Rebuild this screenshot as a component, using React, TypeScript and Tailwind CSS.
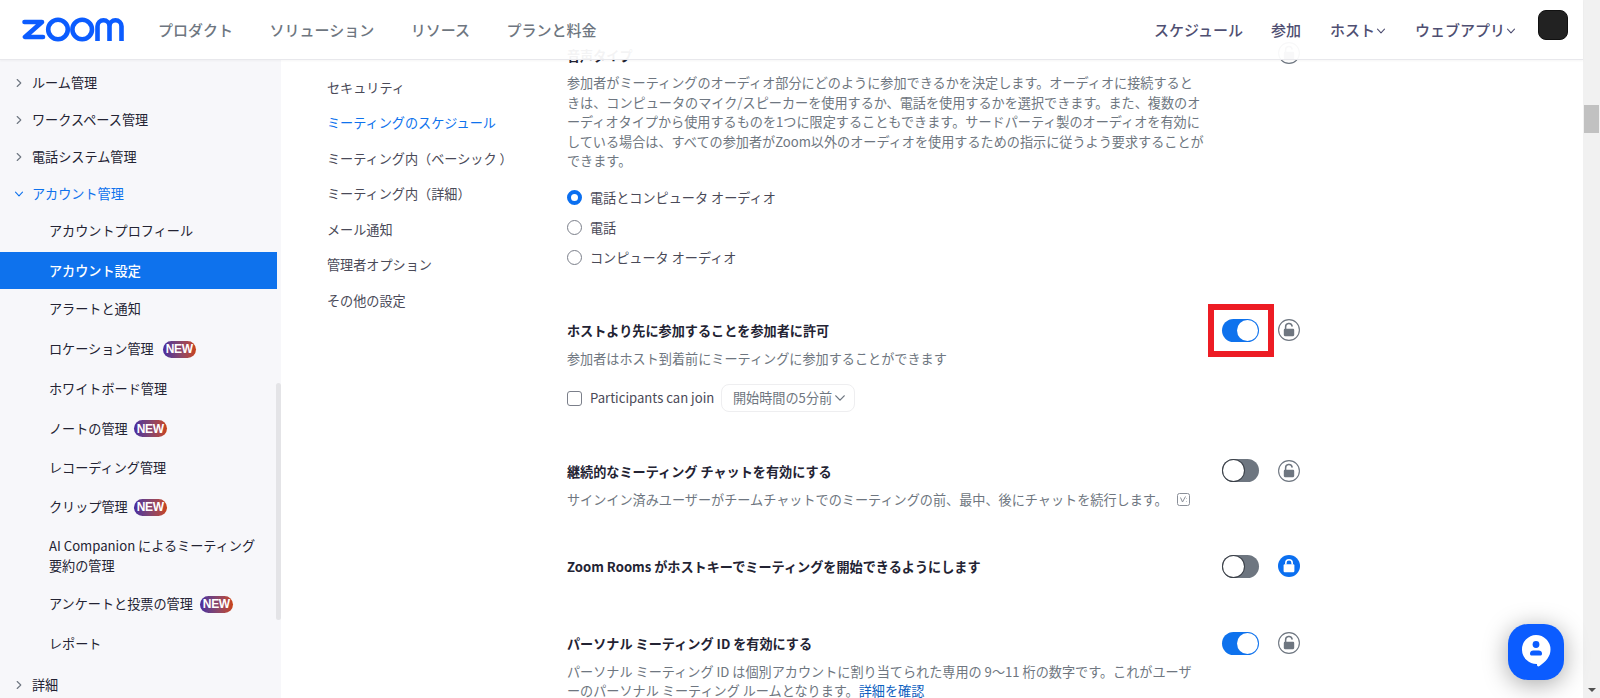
import React from "react";

function Chevron({ down = false, className = "", size = 10 }: { down?: boolean; className?: string; size?: number }) {
  return (
    <svg width={size} height={size} viewBox="0 0 10 10" fill="none" stroke="currentColor" strokeWidth="1.1" strokeLinecap="round" strokeLinejoin="round" className={className}>
      {down ? <path d="M1.5 3.2 5 6.8 8.5 3.2" /> : <path d="M3.2 1.5 6.8 5 3.2 8.5" />}
    </svg>
  );
}

function NewBadge({ ml }: { ml: string }) {
  return (
    <span className={`flex h-[17px] w-[33px] items-center justify-center rounded-full bg-gradient-to-r from-[#4a2a9f] to-[#c9420c] text-[12px] font-bold leading-none tracking-[-0.3px] text-white font-['Liberation_Sans',sans-serif] ${ml}`}>
      NEW
    </span>
  );
}

function Top({ label, open = false }: { label: string; open?: boolean }) {
  return (
    <div className={`flex h-[37px] items-center pl-[14px] text-[13.13px] ${open ? "text-[#0e72ed]" : "text-[#232333]"}`}>
      <Chevron down={open} className={`mr-[8px] ${open ? "text-[#0e72ed]" : "text-[#6e7680]"}`} />
      <span>{label}</span>
    </div>
  );
}

function Sub({ label, badge, h = "h-[40px]" }: { label: string; badge?: string; h?: string }) {
  return (
    <div className={`flex items-center pl-[49px] text-[13.13px] text-[#232333] ${h}`}>
      <span>{label}</span>
      {badge && <NewBadge ml={badge} />}
    </div>
  );
}

function Toggle({ on }: { on: boolean }) {
  return (
    <div className={`flex h-[23px] w-[37px] items-center rounded-full px-[1px] ${on ? "justify-end bg-[#0e72ed]" : "justify-start bg-[#6e7680]"}`}>
      <div className={`h-[21px] w-[21px] rounded-full bg-white ${on ? "" : "shadow-[0_0_0_1px_#3b4048]"}`} />
    </div>
  );
}

function Lock({ locked = false }: { locked?: boolean }) {
  if (locked) {
    return (
      <svg width="22" height="22" viewBox="0 0 22 22" className="shrink-0">
        <circle cx="11" cy="11" r="11" fill="#0b6ff0" />
        <path d="M7.8 9.5V8a3.2 3.2 0 0 1 6.4 0v1.5" fill="none" stroke="#fff" strokeWidth="1.6" />
        <rect x="5.6" y="9.2" width="10.8" height="8" rx="1.2" fill="#fff" />
      </svg>
    );
  }
  return (
    <svg width="22" height="22" viewBox="0 0 22 22" className="shrink-0">
      <circle cx="11" cy="11" r="10.4" fill="#fff" stroke="#6e7680" strokeWidth="1.1" />
      <path d="M7.6 10V7.9a3.3 3.3 0 0 1 6.5-.9" fill="none" stroke="#6e7680" strokeWidth="1.5" strokeLinecap="round" />
      <rect x="5.8" y="9.8" width="10.4" height="7.4" rx="1.1" fill="#6e7680" />
    </svg>
  );
}

function Radio({ on, label }: { on?: boolean; label: string }) {
  return (
    <div className="flex h-[30px] items-center text-[13.13px] text-[#4a4a58]">
      {on ? (
        <span className="mr-[8px] h-[15px] w-[15px] rounded-full border-[4px] border-[#0b6ff0] bg-white" />
      ) : (
        <span className="mr-[8px] h-[15px] w-[15px] rounded-full border border-[#7b7f8a] bg-white" />
      )}
      <span>{label}</span>
    </div>
  );
}

function Row({ title, on, locked, boxed }: { title: string; on: boolean; locked?: boolean; boxed?: boolean }) {
  return (
    <div className="flex h-[23px] items-center">
      <div className="w-[655px] pt-[2px] text-[13.13px] font-bold text-[#232333]">{title}</div>
      <div className="relative">
        <Toggle on={on} />
        {boxed && <div className="absolute -bottom-[15px] -left-[14px] -right-[15px] -top-[15px] border-[6px] border-[#ed1c24]" />}
      </div>
      <div className="ml-[19px]">
        <Lock locked={locked} />
      </div>
    </div>
  );
}

function ZoomLogo() {
  return (
    <svg width="102" height="25" viewBox="0 0 102 25" fill="none" stroke="#0b5cff" strokeWidth="4.6">
      <path d="M2.500 5H20L3 20H21" strokeLinejoin="round" strokeLinecap="round" />
      <circle cx="36" cy="12.500" r="9.800" />
      <circle cx="60.200" cy="12.500" r="9.800" />
      <path d="M75.500 24V9.300a6 6 0 0 1 12 0V24M87.500 9.300a6 6 0 0 1 12 0V24" />
    </svg>
  );
}

function ChatButton() {
  return (
    <div className="absolute left-[1508px] top-[624px] flex h-[56px] w-[56px] items-center justify-center rounded-[20px] bg-[#0b5cff] shadow-[0_4px_24px_rgba(0,0,0,0.35)]">
      <svg width="32" height="38" viewBox="0 0 32 38">
        <path d="M16 2a14.500 14.500 0 0 1 14.500 14.500c0 7-4.600 12-11 16.500-1 .8-2.500.4-2.500-1V31A14.500 14.500 0 0 1 16 2Z" fill="#fff" />
        <circle cx="16" cy="11.500" r="3.400" fill="#0b5cff" />
        <path d="M10 20.500c0-1.800 1.500-3 3.200-3h5.600c1.700 0 3.200 1.200 3.200 3v.5c0 .8-.7 1.500-1.500 1.500h-9c-.8 0-1.500-.7-1.500-1.500Z" fill="#0b5cff" />
      </svg>
    </div>
  );
}

export default function App() {
  const subNav = ["セキュリティ", "ミーティングのスケジュール", "ミーティング内（ベーシック ）", "ミーティング内（詳細）", "メール通知", "管理者オプション", "その他の設定"];
  return (
    <div className="relative flex h-[698px] w-[1600px] overflow-hidden bg-white font-['Noto_Sans_CJK_JP',sans-serif]">
      <div className="absolute left-0 top-0 z-20 flex h-[60px] w-[1583px] items-center border-b border-[#e8e8ec] bg-white/95 pl-[22px] pr-[15px] shadow-[0_1px_2px_rgba(0,0,0,0.04)]">
        <ZoomLogo />
        <nav className="ml-[34px] flex gap-[36.500px] pt-[2px] text-[15px] font-medium text-[#6e7680]">
          <span>プロダクト</span>
          <span>ソリューション</span>
          <span>リソース</span>
          <span>プランと料金</span>
        </nav>
        <div className="ml-auto flex items-center text-[15px] font-medium text-[#4f4f72]">
          <span className="pt-[2px]">スケジュール</span>
          <span className="ml-[28px] pt-[2px]">参加</span>
          <span className="ml-[29px] pt-[2px]">ホスト</span>
          <Chevron down className="ml-[1px] mt-[2px] text-[#4f4f72]" />
          <span className="ml-[29px] pt-[2px]">ウェブアプリ</span>
          <Chevron down className="ml-[1px] mt-[2px] text-[#4f4f72]" />
          <div className="mb-[10px] ml-[22px] h-[30px] w-[30px] rounded-[8px] border border-[#111] bg-[#222]" />
        </div>
      </div>

      <aside className="relative w-[281px] shrink-0 overflow-hidden bg-[#f7f7fa] pt-[64px]">
        <Top label="ルーム管理" />
        <Top label="ワークスペース管理" />
        <Top label="電話システム管理" />
        <Top label="アカウント管理" open />
        <Sub label="アカウントプロフィール" h="h-[38px]" />
        <div className="mt-[2px] flex h-[37px] w-[277px] items-center bg-[#0e72ed] pl-[49px] text-[13.13px] font-medium text-white">アカウント設定</div>
        <Sub label="アラートと通知" />
        <Sub label="ロケーション管理" badge="ml-[9px]" />
        <Sub label="ホワイトボード管理" />
        <Sub label="ノートの管理" badge="ml-[6px]" h="h-[39px]" />
        <Sub label="レコーディング管理" h="h-[39px]" />
        <Sub label="クリップ管理" badge="ml-[6px]" />
        <div className="flex h-[57px] items-center pl-[49px] text-[13.13px] leading-[19.500px] text-[#232333]">
          <span>
            AI Companion によるミーティング
            <br />
            要約の管理
          </span>
        </div>
        <Sub label="アンケートと投票の管理" badge="ml-[7px]" />
        <Sub label="レポート" />
        <div className="mt-[2px]">
          <Top label="詳細" />
        </div>
        <div className="absolute right-0 top-[383px] h-[237px] w-[5px] rounded-full bg-[#e4e4e7]" />
      </aside>

      <div className="w-[286px] shrink-0 pl-[46px] pt-[70px] text-[13.13px] text-[#4a4a58]">
        {subNav.map((s, i) => (
          <div key={s} className={`flex h-[35.500px] items-center ${i === 1 ? "text-[#0e72ed]" : ""}`}>
            {s}
          </div>
        ))}
      </div>

      <main className="w-[733px] shrink-0 pt-[42px]">
        <div className="flex h-[22px] items-center">
          <div className="w-[655px] pt-[6px] text-[13.13px] font-bold text-[#232333]">音声タイプ</div>
          <div className="ml-[56px]">
            <Lock />
          </div>
        </div>
        <p className="mt-[9px] whitespace-nowrap text-[13.13px] leading-[19.500px] text-[#6e7680]">
          参加者がミーティングのオーディオ部分にどのように参加できるかを決定します。オーディオに接続すると
          <br />
          きは、コンピュータのマイク/スピーカーを使用するか、電話を使用するかを選択できます。また、複数のオ
          <br />
          ーディオタイプから使用するものを1つに限定することもできます。サードパーティ製のオーディオを有効に
          <br />
          している場合は、すべての参加者がZoom以外のオーディオを使用するための指示に従うよう要求することが
          <br />
          できます。
        </p>
        <div className="mt-[12px]">
          <Radio on label="電話とコンピュータ オーディオ" />
          <Radio label="電話" />
          <Radio label="コンピュータ オーディオ" />
        </div>

        <div className="mt-[46px]">
          <Row title="ホストより先に参加することを参加者に許可" on boxed />
        </div>
        <p className="mt-[7px] text-[13.13px] leading-[19.500px] text-[#6e7680]">参加者はホスト到着前にミーティングに参加することができます</p>
        <div className="mt-[16px] flex h-[28px] items-center">
          <span className="mr-[8px] h-[15px] w-[15px] rounded-[3px] border border-[#7b7f8a] bg-white" />
          <span className="w-[123px] whitespace-nowrap text-[13.130px] text-[#4a4a58]">Participants can join</span>
          <div className="ml-[8px] flex h-[28px] w-[134px] items-center rounded-[8px] border border-[#eeeef0] pl-[11px] text-[13.13px] text-[#6e7680]">
            開始時間の5分前
            <Chevron down size={12} className="ml-[2px] text-[#6e7680]" />
          </div>
        </div>

        <div className="mt-[47px]">
          <Row title="継続的なミーティング チャットを有効にする" on={false} />
        </div>
        <div className="mt-[8px] flex h-[19.500px] items-center text-[13.13px] text-[#6e7680]">
          <span>サインイン済みユーザーがチームチャットでのミーティングの前、最中、後にチャットを続行します。</span>
          <svg width="13" height="13" viewBox="0 0 13 13" fill="none" stroke="#8a8f98" strokeWidth="1" className="ml-[9px]">
            <rect x="0.500" y="0.500" width="12" height="12" rx="2" />
            <path d="M3.500 4.500 5.500 9 8.500 3.500M9.500 5.500v.5M9.500 8v.5" />
          </svg>
        </div>

        <div className="mt-[45px]">
          <Row title="Zoom Rooms がホストキーでミーティングを開始できるようにします" on={false} locked />
        </div>

        <div className="mt-[54px]">
          <Row title="パーソナル ミーティング ID を有効にする" on />
        </div>
        <p className="mt-[7px] whitespace-nowrap text-[13.13px] leading-[19.500px] text-[#6e7680]">
          パーソナル ミーティング ID は個別アカウントに割り当てられた専用の 9〜11 桁の数字です。これがユーザ
          <br />
          ーのパーソナル ミーティング ルームとなります。<span className="text-[#0e5fbf]">詳細を確認</span>
        </p>
      </main>

      <div className="absolute right-0 top-0 flex h-[698px] w-[17px] flex-col items-center bg-[#f1f1f1]">
        <div className="mt-[105px] h-[28px] w-[15px] bg-[#c1c1c1]" />
        <div className="mb-[6px] mt-auto h-0 w-0 border-x-[4px] border-t-[4px] border-x-transparent border-t-[#505050]" />
      </div>

      <ChatButton />
    </div>
  );
}
